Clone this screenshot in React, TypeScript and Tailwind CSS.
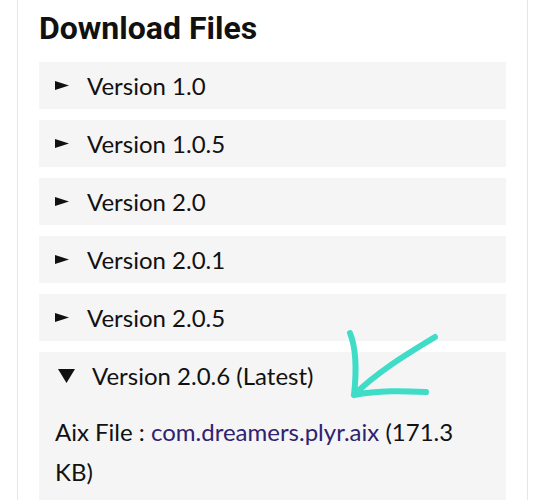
import { useState } from 'react'

const versions = ['1.0', '1.0.5', '2.0', '2.0.1', '2.0.5']

function Caret({ down }: { down?: boolean }) {
  return down ? (
    <svg width="17" height="14" viewBox="0 0 17 14" className="mr-[17px]">
      <path d="M0 0 H17 L8.5 14 Z" fill="#111" />
    </svg>
  ) : (
    <svg width="14" height="9" viewBox="0 0 14 9" className="mr-[18px]">
      <path d="M0 0 L14 4.5 L0 9 Z" fill="#111" />
    </svg>
  )
}

function Row({ label }: { label: string }) {
  return (
    <div className="flex h-[47px] items-center bg-[#f5f5f5] pl-[16px] text-[24px] text-[#111]">
      <Caret />
      <span>{label}</span>
    </div>
  )
}

export default function App() {
  const [open] = useState(true)

  return (
    <div className="min-h-[500px] bg-white" style={{ fontFamily: 'Lato, "Open Sans", sans-serif' }}>
      <div className="relative mx-[17px] min-h-[500px] border-x border-[#e6e6e6] px-[21px] pt-[10px]">
        <h2 className="mb-[16px] text-[32px] font-bold leading-[36px] text-[#111]" style={{ fontFamily: 'Roboto, sans-serif' }}>
          Download Files
        </h2>

        <div className="flex flex-col gap-[11px]">
          {versions.map((v) => (
            <Row key={v} label={`Version ${v}`} />
          ))}

          {/* latest, expanded */}
          <div className="bg-[#f5f5f5] pb-[20px] text-[24px] text-[#111]">
            <div className="flex h-[48px] items-center pl-[19px]">
              <Caret down />
              <span>Version 2.0.6 {open && '(Latest)'}</span>
            </div>
            <p className="mt-[12px] px-[16px] leading-[40px]">
              Aix File : <a className="text-[#2f2270]">com.dreamers.plyr.aix</a> (171.3 KB)
            </p>
          </div>
        </div>

        {/* hand-drawn pointer */}
        <svg className="pointer-events-none absolute left-[326px] top-[328px]" width="100" height="75" viewBox="0 0 100 75" fill="none">
          <path d="M6 5 C 12 20, 13 40, 10 67 M10 67 C 35 42, 70 22, 91 9 M10 67 C 35 62, 60 63, 82 64" stroke="#3fdcc8" strokeWidth="6" strokeLinecap="round" strokeLinejoin="round" />
        </svg>
      </div>
    </div>
  )
}
